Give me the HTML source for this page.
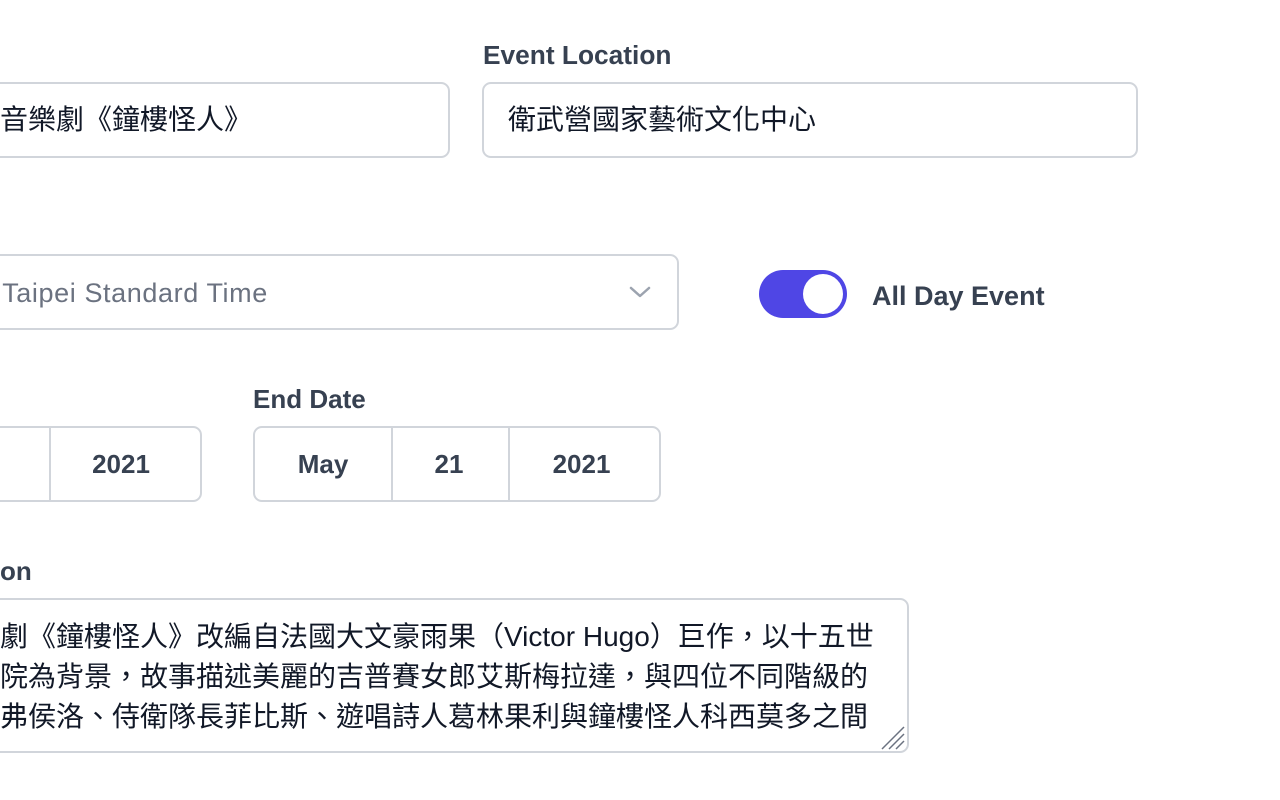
<!DOCTYPE html>
<html><head><meta charset="utf-8"><style>
body{margin:0;width:1280px;height:800px;background:#fff;position:relative;overflow:hidden;font-family:"Liberation Sans","Noto Sans CJK TC",sans-serif;color:#374151}
.a{position:absolute}
.box{position:absolute;border:2px solid #d1d5db;border-radius:9px;box-sizing:border-box;background:#fff}
.lbl{position:absolute;font-size:26px;font-weight:bold;color:#374151;line-height:30px}
.t{position:absolute;font-size:28px;color:#111827;line-height:30px;white-space:nowrap}
.cell{position:absolute;top:0;height:100%;display:flex;align-items:center;justify-content:center;font-size:26px;font-weight:bold;color:#374151}
</style></head><body>
<div class="lbl" style="left:483px;top:40px;font-size:26.3px">Event Location</div>
<div class="box" style="left:-20px;top:82px;width:470px;height:76px"></div>
<div class="t" style="left:0;top:105px">音樂劇《鐘樓怪人》</div>
<div class="box" style="left:482px;top:82px;width:656px;height:76px"></div>
<div class="t" style="left:508px;top:105px">衛武營國家藝術文化中心</div>

<div class="box" style="left:-20px;top:254px;width:699px;height:76px"></div>
<div class="t" style="left:-15px;top:278px;color:#6b7280;font-size:27px;letter-spacing:0.6px">) Taipei Standard Time</div>
<svg class="a" style="left:628px;top:284px" width="24" height="16" viewBox="0 0 24 16"><path d="M3 4l9 8 9-8" fill="none" stroke="#9ca3af" stroke-width="2.5" stroke-linecap="round" stroke-linejoin="round"/></svg>
<div class="a" style="left:759px;top:270px;width:88px;height:48px;border-radius:24px;background:#4f46e5"></div>
<div class="a" style="left:803px;top:274px;width:40px;height:40px;border-radius:50%;background:#fff"></div>
<div class="lbl" style="left:872px;top:281px;font-size:27px">All Day Event</div>

<div class="lbl" style="left:253px;top:384px">End Date</div>
<div class="box" style="left:-20px;top:426px;width:222px;height:76px">
<div class="a" style="left:67px;top:0;bottom:0;border-left:2px solid #d1d5db"></div>
<div class="cell" style="left:69px;width:140px">2021</div></div>
<div class="box" style="left:253px;top:426px;width:408px;height:76px">
<div class="cell" style="left:0;width:136px">May</div>
<div class="a" style="left:136px;top:0;bottom:0;border-left:2px solid #d1d5db"></div>
<div class="cell" style="left:138px;width:112px">21</div>
<div class="a" style="left:253px;top:0;bottom:0;border-left:2px solid #d1d5db"></div>
<div class="cell" style="left:255px;width:143px">2021</div></div>

<div class="lbl" style="left:0;top:556px">on</div>
<div class="box" style="left:-20px;top:598px;width:929px;height:155px"></div>
<div class="t" style="left:0;top:617px;line-height:40px;font-size:28px">劇《鐘樓怪人》改編自法國大文豪雨果（Victor Hugo）巨作，以十五世<br>院為背景，故事描述美麗的吉普賽女郎艾斯梅拉達，與四位不同階級的<br>弗侯洛、侍衛隊長菲比斯、遊唱詩人葛林果利與鐘樓怪人科西莫多之間</div>
<svg class="a" style="left:880px;top:725px" width="26" height="26"><path d="M2 24L24 2M9 24L24 9M16 24L24 16" stroke="#6b7280" stroke-width="1.5"/></svg>
</body></html>
